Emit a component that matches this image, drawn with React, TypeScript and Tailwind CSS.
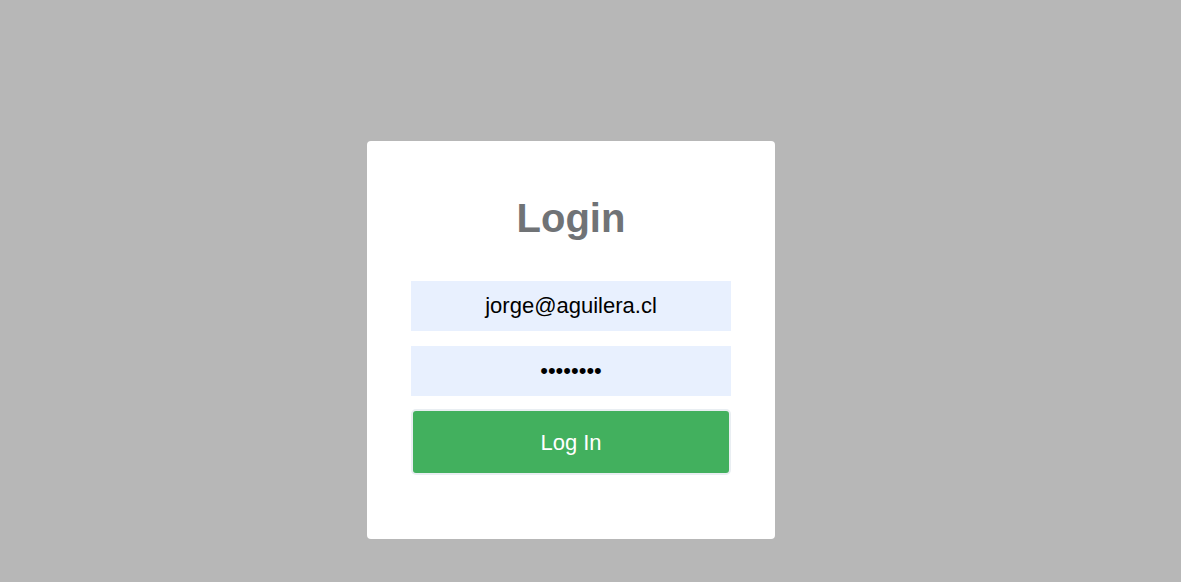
import React, { useState } from 'react';

const App: React.FC = () => {
  const [email, setEmail] = useState('jorge@aguilera.cl');
  const [password, setPassword] = useState('password');

  return (
    <div className="min-h-[582px] w-full bg-[#b7b7b7] pt-[141px] font-['Liberation_Sans',Arial,sans-serif]">
      <div className="ml-[367px] w-[408px] h-[398px] rounded-[4px] bg-white px-[44px] pt-[53px]">
        <h1 className="text-center text-[40px] leading-[48px] font-bold text-[#707376]">Login</h1>

        <form className="mt-[39px] flex flex-col" onSubmit={(e) => e.preventDefault()}>
          <input
            type="email"
            value={email}
            onChange={(e) => setEmail(e.target.value)}
            className="h-[50px] w-[320px] bg-[#e8f0fe] text-center text-[22px] text-black outline-none"
          />
          <input
            type="password"
            value={password}
            onChange={(e) => setPassword(e.target.value)}
            className="mt-[15px] h-[50px] w-[320px] bg-[#e8f0fe] text-center text-[22px] text-black outline-none"
          />
          <button
            type="submit"
            className="mt-[13px] h-[66px] w-[320px] rounded-[5px] border-2 border-[#e9eef2] bg-[#42b05e] text-[22px] text-white"
          >
            Log In
          </button>
        </form>
      </div>
    </div>
  );
};

export default App;
